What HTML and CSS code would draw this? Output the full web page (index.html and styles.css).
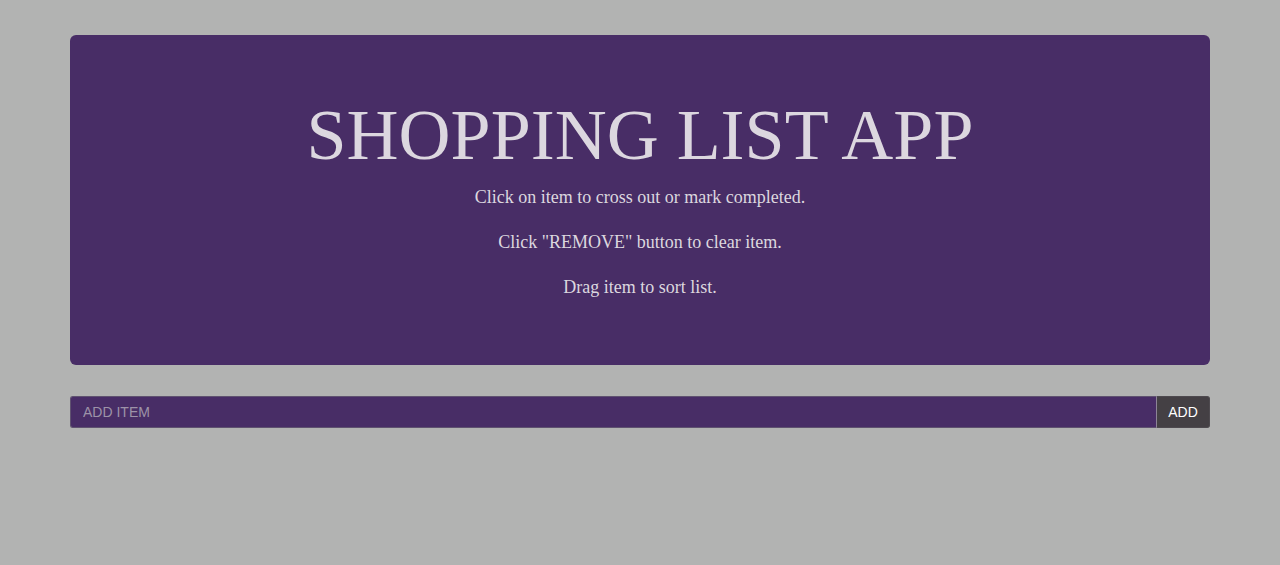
FILE: index.html
```html
<!DOCTYPE html>
<html lang="en">
<head>
<meta charset="utf-8">
<title>Shopping List App</title>
<link rel="stylesheet" href="styles.css">
</head>
<body>
<div class="container">
  <header class="jumbotron">
    <h1 class="title">SHOPPING LIST APP</h1>
    <p class="lead">Click on item to cross out or mark completed.</p>
    <p class="lead">Click "REMOVE" button to clear item.</p>
    <p class="lead">Drag item to sort list.</p>
  </header>
  <form class="add-form">
    <input class="add-input" type="text" placeholder="ADD ITEM">
    <button class="add-btn" type="button">ADD</button>
  </form>
</div>
</body>
</html>
```
FILE: styles.css
```css
html, body {
  margin: 0;
  padding: 0;
  background: #b2b3b2;
  height: 100%;
}
body {
  font-family: "Liberation Serif", "Times New Roman", serif;
}
.container {
  width: 1140px;
  margin: 0 auto;
  padding-top: 35px;
}
.jumbotron {
  background: #482d66;
  border-radius: 6px;
  padding: 48px 60px;
  margin-bottom: 31px;
  text-align: center;
  color: #dcd7df;
}
.title {
  margin: 18px 0 12px;
  font-size: 72px;
  line-height: 69px;
  font-weight: normal;
}
.lead {
  margin: 0 0 15px;
  font-size: 18px;
  line-height: 30px;
}
.add-form {
  display: flex;
  margin: 0;
}
.add-input {
  flex: 1;
  height: 32px;
  box-sizing: border-box;
  margin: 0;
  padding: 0 12px;
  background: #482d66;
  border: 1px solid #5f5270;
  border-right: 1px solid #8d8496;
  border-radius: 3px 0 0 3px;
  color: #dcd7df;
  font-family: "Liberation Sans", Arial, sans-serif;
  font-size: 14px;
  outline: none;
}
.add-input::placeholder {
  color: #9d93a8;
}
.add-btn {
  width: 53px;
  height: 32px;
  box-sizing: border-box;
  margin: 0;
  padding: 0;
  background: #444044;
  border: 1px solid #4e4a4f;
  border-left: none;
  border-radius: 0 3px 3px 0;
  color: #ffffff;
  font-family: "Liberation Sans", Arial, sans-serif;
  font-size: 14px;
}
```
